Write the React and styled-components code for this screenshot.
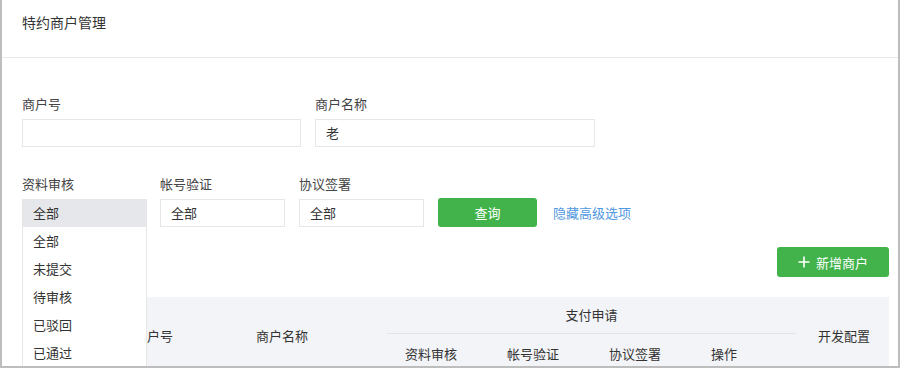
import React from "react";
import styled, { createGlobalStyle } from "styled-components";

const GlobalStyle = createGlobalStyle`
  body {
    margin: 0;
    background: #fff;
    font-family: "Noto Sans CJK SC", "Noto Sans", sans-serif;
    color: #333;
  }
  * { box-sizing: border-box; }
`;

const Frame = styled.div`
  width: 900px;
  height: 368px;
  overflow: hidden;
  border: 2px solid #bdbdbd;
  border-top: none;
  background: #fff;
`;

const Header = styled.div`
  height: 58px;
  padding: 13px 20px 0;
  border-bottom: 1px solid #e8e8e8;
  font-size: 14px;
  line-height: 18px;
  color: #333;
`;

const Body = styled.div`
  padding: 37px 9px 0 20px;
`;

const Row = styled.div`
  display: flex;
  align-items: flex-end;
  gap: ${(p) => p.gap || 14}px;
  margin-bottom: ${(p) => p.mb || 0}px;
`;

const Field = styled.div`
  display: flex;
  flex-direction: column;
  position: relative;
`;

const Label = styled.label`
  font-size: 13px;
  line-height: 18px;
  color: #444;
  margin-bottom: 6px;
`;

const Input = styled.div`
  width: ${(p) => p.w}px;
  height: 28px;
  border: 1px solid #e6e6e6;
  padding: 0 10px;
  font-size: 13px;
  line-height: 26px;
  color: #333;
`;

const Dropdown = styled.ul`
  position: absolute;
  left: 0;
  top: 24px;
  width: 125px;
  margin: 0;
  padding: 0;
  list-style: none;
  background: #fff;
  border: 1px solid #e6e6e6;
  border-top: none;
  z-index: 5;
`;

const Option = styled.li`
  height: 28px;
  line-height: 28px;
  padding: 0 10px;
  font-size: 13px;
  color: #333;
  background: ${(p) => (p.active ? "#e6e7eb" : "#fff")};
`;

const GreenButton = styled.button`
  width: ${(p) => p.w}px;
  height: ${(p) => p.h}px;
  border: none;
  border-radius: 3px;
  background: #42b34b;
  color: #fff;
  font-family: inherit;
  font-size: 13px;
  display: inline-flex;
  align-items: center;
  justify-content: center;
  gap: 6px;
  padding: 0;
`;

const Link = styled.a`
  font-size: 13px;
  color: #4f97e0;
  line-height: 28px;
  margin-left: 3px;
  text-decoration: none;
`;

const Toolbar = styled.div`
  display: flex;
  justify-content: flex-end;
  margin-top: 20px;
`;

const Table = styled.table`
  margin-top: 20px;
  width: 867px;
  border-collapse: collapse;
  table-layout: fixed;
  background: #f3f4f7;
`;

const Th = styled.th`
  font-weight: normal;
  font-size: 13px;
  color: #333;
  text-align: ${(p) => p.align || "left"};
  padding: 0 0 0 ${(p) => (p.align === "center" ? 0 : p.pl || 18)}px;
  height: ${(p) => p.h || 36}px;
  border-bottom: ${(p) => (p.line ? "1px solid #e2e3e6" : "none")};
  vertical-align: middle;
`;

const statusOptions = ["全部", "全部", "未提交", "待审核", "已驳回", "已通过"];

const Plus = () => (
  <svg width="12" height="12" viewBox="0 0 12 12">
    <path d="M6 0.5v11M0.5 6h11" stroke="#fff" strokeWidth="1.6" />
  </svg>
);

export default function App() {
  return (
    <>
      <GlobalStyle />
      <Frame>
        <Header>特约商户管理</Header>
        <Body>
          <Row mb={28}>
            <Field>
              <Label>商户号</Label>
              <Input w={279} />
            </Field>
            <Field>
              <Label>商户名称</Label>
              <Input w={280}>老</Input>
            </Field>
          </Row>
          <Row gap={13}>
            <Field>
              <Label>资料审核</Label>
              <Input w={125}>全部</Input>
              <Dropdown>
                {statusOptions.map((o, i) => (
                  <Option key={i} active={i === 0}>
                    {o}
                  </Option>
                ))}
              </Dropdown>
            </Field>
            <Field>
              <Label>帐号验证</Label>
              <Input w={125}>全部</Input>
            </Field>
            <Field style={{ marginLeft: 1 }}>
              <Label>协议签署</Label>
              <Input w={125}>全部</Input>
            </Field>
            <GreenButton w={99} h={29} style={{ marginLeft: 1 }}>
              查询
            </GreenButton>
            <Link>隐藏高级选项</Link>
          </Row>
          <Toolbar>
            <GreenButton w={112} h={30}>
              <Plus />
              新增商户
            </GreenButton>
          </Toolbar>
          <Table>
            <colgroup>
              <col style={{ width: 94 }} />
              <col style={{ width: 122 }} />
              <col style={{ width: 149 }} />
              <col style={{ width: 102 }} />
              <col style={{ width: 102 }} />
              <col style={{ width: 102 }} />
              <col style={{ width: 103 }} />
              <col style={{ width: 93 }} />
            </colgroup>
            <thead>
              <tr>
                <Th rowSpan={2} />
                <Th rowSpan={2}>商户号</Th>
                <Th rowSpan={2}>商户名称</Th>
                <Th colSpan={4} align="center" line>
                  支付申请
                </Th>
                <Th rowSpan={2} pl={22}>
                  开发配置
                </Th>
              </tr>
              <tr>
                <Th h={40}>资料审核</Th>
                <Th h={40}>帐号验证</Th>
                <Th h={40}>协议签署</Th>
                <Th h={40}>操作</Th>
              </tr>
            </thead>
          </Table>
        </Body>
      </Frame>
    </>
  );
}
